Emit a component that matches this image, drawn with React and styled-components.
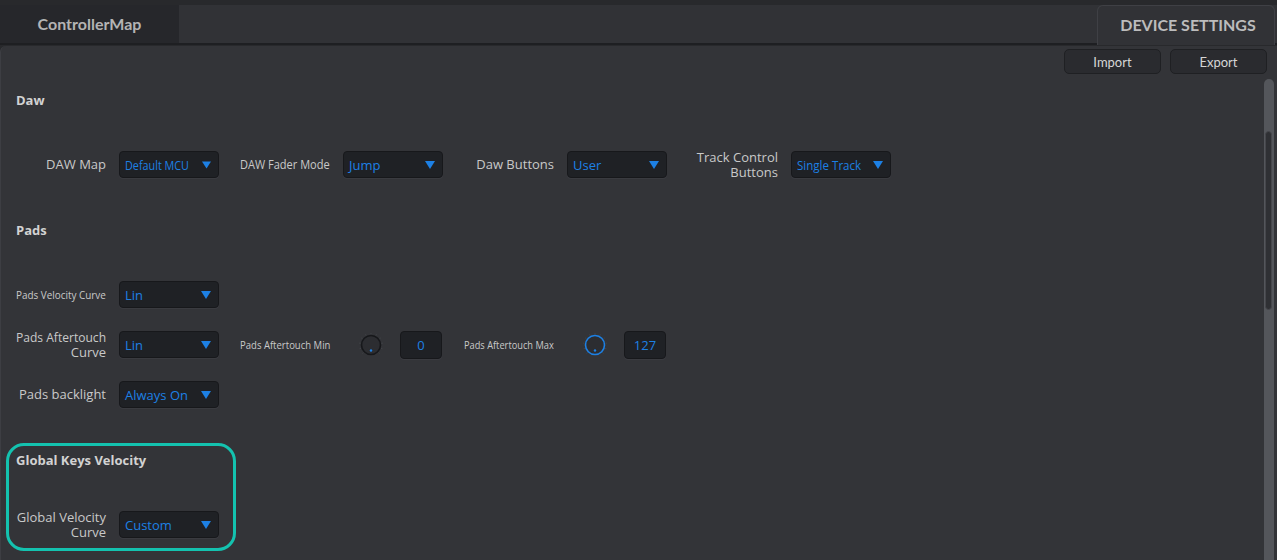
import React, { useLayoutEffect, useRef, useState } from "react";
import styled, { createGlobalStyle } from "styled-components";

const GlobalStyle = createGlobalStyle`
  html, body { margin: 0; padding: 0; background: #28292c; }
  body { font-family: "Open Sans", Lato, sans-serif; }
`;

const BLUE = "#1d80e4";

const Page = styled.div`
  width: 1277px;
  height: 560px;
  padding-top: 5px;
  box-sizing: border-box;
  background: #28292c;
  display: flex;
  flex-direction: column;
  overflow: hidden;
`;

const TabBar = styled.div`
  height: 38px;
  display: flex;
  background: #313236;
  border-bottom: 2px solid #1e1f22;
  font-family: Lato, "Open Sans", sans-serif;
`;

const MainTab = styled.div`
  width: 179px;
  background: #26272b;
  color: #b4b4b4;
  font-weight: 700;
  font-size: 16px;
  display: flex;
  align-items: center;
  justify-content: center;
  padding-bottom: 2px;
  box-sizing: border-box;
`;

const TabSpacer = styled.div`
  flex: 1;
`;

const SideTab = styled.div`
  width: 178px;
  margin-right: 2px;
  margin-bottom: -2px;
  border: 1px solid #3f4045;
  border-bottom: none;
  border-radius: 6px 6px 0 0;
  background: #313236;
  color: #bcbcbc;
  font-weight: 700;
  font-size: 16px;
  display: flex;
  align-items: center;
  justify-content: center;
  padding: 0 0 3px 4px;
  box-sizing: border-box;
`;

const Panel = styled.div`
  flex: 1;
  margin-top: 1px;
  background: #333438;
  border-left: 1px solid #3d3e43;
  border-top-left-radius: 6px;
  display: flex;
  flex-direction: column;
  min-height: 0;
`;

const Toolbar = styled.div`
  display: flex;
  justify-content: flex-end;
  gap: 9px;
  padding: 3px 10px 0 0;
`;

const ToolButton = styled.button`
  width: 97px;
  height: 25px;
  background: #2a2b2f;
  border: 1px solid #1f2023;
  border-radius: 5px;
  color: #d6d6d6;
  font-family: Lato, "Open Sans", sans-serif;
  font-size: 13px;
  padding: 0;
`;

const Body = styled.div`
  flex: 1;
  display: flex;
  margin-top: 5px;
  min-height: 0;
`;

const Content = styled.div`
  flex: 1;
  padding: 13px 0 0 15px;
`;

const ScrollTrack = styled.div`
  width: 10px;
  margin-right: 3px;
  background: #54565b;
  border-radius: 5px 5px 0 0;
  display: flex;
  justify-content: center;
`;

const ScrollThumb = styled.div`
  width: 7px;
  height: 179px;
  margin-top: 52px;
  margin-left: -1px;
  background: #2f3034;
  border: 1px solid #46474c;
  border-radius: 4px;
  box-sizing: border-box;
`;

const Section = styled.section`
  margin-top: ${(p) => (p.$first ? 0 : 44)}px;
`;

const Heading = styled.h3`
  margin: 0;
  height: 16px;
  line-height: 16px;
  font-size: 13px;
  font-weight: 700;
  color: #d2d2d2;
`;

const Rows = styled.div`
  margin-top: 43px;
  display: flex;
  flex-direction: column;
  gap: 23px;
`;

const Row = styled.div`
  display: flex;
  align-items: center;
  gap: 13px;
  height: 27px;
`;

const Field = styled.div`
  display: flex;
  align-items: center;
  gap: 13px;
`;

const LabelBox = styled.div`
  width: ${(p) => p.$width || 98}px;
  color: #c9c9c9;
  font-size: ${(p) => (p.$small ? 11 : 13)}px;
  line-height: 15px;
  display: flex;
  flex-direction: column;
  align-items: flex-end;
`;

const FitSpan = styled.span`
  display: inline-block;
  white-space: nowrap;
  transform-origin: ${(p) => p.$origin} center;
`;

const SelectBox = styled.div`
  width: 100px;
  height: 27px;
  box-sizing: border-box;
  background: #1f2125;
  border: 1px solid #17181b;
  border-radius: 4px;
  box-shadow: 0 1px 0 #3a3b40;
  display: flex;
  align-items: center;
  padding: 0 7px 0 5px;
  color: ${BLUE};
  font-size: 13px;
`;

const ValueSlot = styled.div`
  flex: 1;
  display: flex;
`;

const KnobGroup = styled.div`
  width: 100px;
  display: flex;
  align-items: center;
`;

const KnobWrap = styled.div`
  width: 22px;
  height: 22px;
  margin-left: 17px;
  margin-right: 18px;
`;

const NumberBox = styled.div`
  width: 42px;
  height: 28px;
  box-sizing: border-box;
  background: #1f2125;
  border: 1px solid #17181b;
  border-radius: 4px;
  box-shadow: 0 1px 0 #3a3b40;
  color: ${BLUE};
  font-size: 13px;
  display: flex;
  align-items: center;
  justify-content: center;
`;

const Highlight = styled.div`
  width: 230px;
  margin: 35px 0 0 -10px;
  padding: 6px 7px 10px 7px;
  box-sizing: border-box;
  border: 3px solid #14c2af;
  border-radius: 18px;
`;

// squeezes text horizontally to fit, like the original app does
function FitText({ max, origin = "left", children }) {
  const ref = useRef(null);
  const [scale, setScale] = useState(1);
  useLayoutEffect(() => {
    const measure = () => {
      const w = ref.current ? ref.current.offsetWidth : 0;
      setScale(w > max ? max / w : 1);
    };
    measure();
    if (document.fonts) document.fonts.ready.then(measure);
  }, [max]);
  return (
    <FitSpan ref={ref} $origin={origin} style={{ transform: `scaleX(${scale})` }}>
      {children}
    </FitSpan>
  );
}

function Label({ text, width, small }) {
  return (
    <LabelBox $width={width} $small={small}>
      {text.split("|").map((line) => (
        <FitText key={line} max={90} origin="right">
          {line}
        </FitText>
      ))}
    </LabelBox>
  );
}

function Arrow() {
  return (
    <svg width="10" height="8" viewBox="0 0 10 8">
      <polygon points="0,0 10,0 5,8" fill={BLUE} />
    </svg>
  );
}

function Select({ value }) {
  return (
    <SelectBox>
      <ValueSlot>
        <FitText max={64}>{value}</FitText>
      </ValueSlot>
      <Arrow />
    </SelectBox>
  );
}

function Knob({ active }) {
  const ticks = [];
  for (let i = 0; i < 11; i++) {
    const a = ((-135 + i * 27) * Math.PI) / 180;
    ticks.push(
      <line
        key={i}
        x1={11 + Math.sin(a) * 10.5}
        y1={11 - Math.cos(a) * 10.5}
        x2={11 + Math.sin(a) * 12}
        y2={11 - Math.cos(a) * 12}
        stroke="#44464b"
        strokeWidth="0.8"
      />
    );
  }
  return (
    <KnobWrap>
      <svg width="22" height="22" viewBox="0 0 22 22" overflow="visible">
        {ticks}
        <circle cx="11" cy="11" r="9.5" fill="#2c2d31" stroke={active ? BLUE : "#17181b"} strokeWidth="1.6" />
        <circle cx="11" cy="16.5" r="1.2" fill={BLUE} />
      </svg>
    </KnobWrap>
  );
}

export default function App() {
  return (
    <>
      <GlobalStyle />
      <Page>
        <TabBar>
          <MainTab>ControllerMap</MainTab>
          <TabSpacer />
          <SideTab>DEVICE SETTINGS</SideTab>
        </TabBar>
        <Panel>
          <Toolbar>
            <ToolButton>Import</ToolButton>
            <ToolButton>Export</ToolButton>
          </Toolbar>
          <Body>
            <Content>
              <Section $first>
                <Heading>Daw</Heading>
                <Rows>
                  <Row>
                    <Field>
                      <Label width={90} text="DAW Map" />
                      <Select value="Default MCU" />
                    </Field>
                    <Field>
                      <Label text="DAW Fader Mode" />
                      <Select value="Jump" />
                    </Field>
                    <Field>
                      <Label text="Daw Buttons" />
                      <Select value="User" />
                    </Field>
                    <Field>
                      <Label text="Track Control|Buttons" />
                      <Select value="Single Track" />
                    </Field>
                  </Row>
                </Rows>
              </Section>

              <Section>
                <Heading>Pads</Heading>
                <Rows>
                  <Row>
                    <Field>
                      <Label width={90} small text="Pads Velocity Curve" />
                      <Select value="Lin" />
                    </Field>
                  </Row>
                  <Row>
                    <Field>
                      <Label width={90} text="Pads Aftertouch|Curve" />
                      <Select value="Lin" />
                    </Field>
                    <Field>
                      <Label small text="Pads Aftertouch Min" />
                      <KnobGroup>
                        <Knob />
                        <NumberBox>0</NumberBox>
                      </KnobGroup>
                    </Field>
                    <Field>
                      <Label small text="Pads Aftertouch Max" />
                      <KnobGroup>
                        <Knob active />
                        <NumberBox>127</NumberBox>
                      </KnobGroup>
                    </Field>
                  </Row>
                  <Row>
                    <Field>
                      <Label width={90} text="Pads backlight" />
                      <Select value="Always On" />
                    </Field>
                  </Row>
                </Rows>
              </Section>

              <Highlight>
                <Heading>Global Keys Velocity</Heading>
                <Rows>
                  <Row>
                    <Field>
                      <Label width={90} text="Global Velocity|Curve" />
                      <Select value="Custom" />
                    </Field>
                  </Row>
                </Rows>
              </Highlight>
            </Content>
            <ScrollTrack>
              <ScrollThumb />
            </ScrollTrack>
          </Body>
        </Panel>
      </Page>
    </>
  );
}
